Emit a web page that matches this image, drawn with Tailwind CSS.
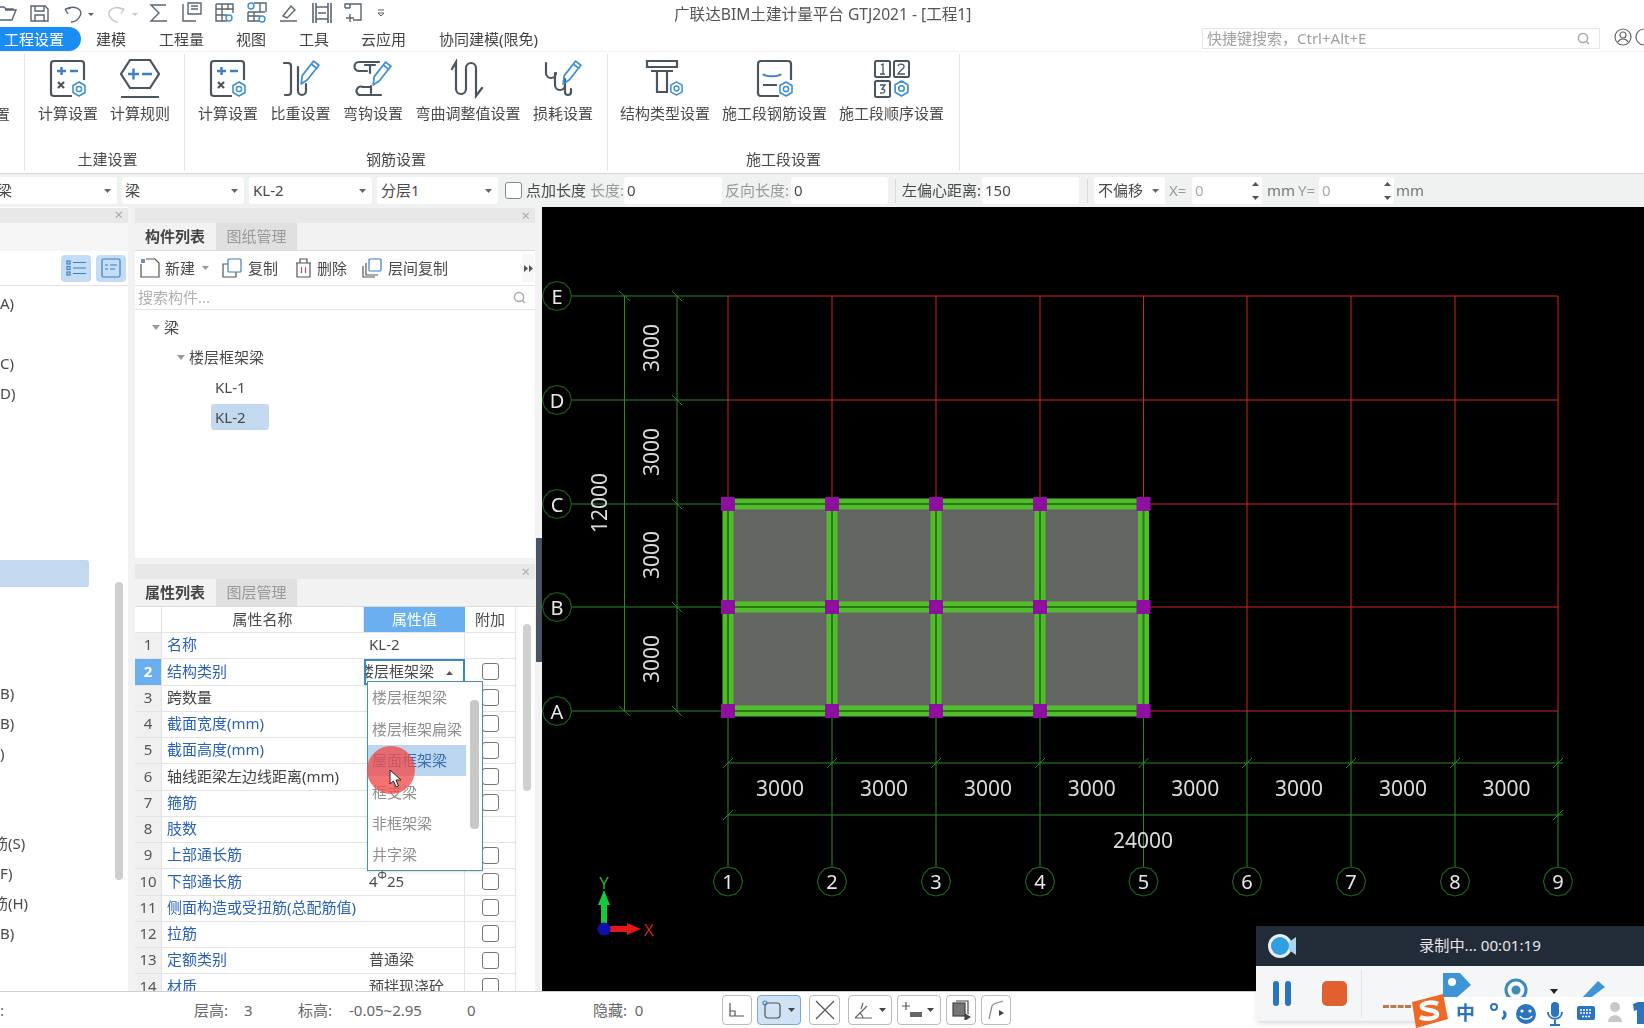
<!DOCTYPE html>
<html lang="zh">
<head>
  <meta charset="UTF-8">
  <title>广联达BIM土建计量平台 GTJ2021</title>
  <script src="https://cdn.jsdelivr.net/npm/@tailwindcss/browser@4"></script>
</head>
<body class="bg-white overflow-hidden">
<svg class="hidden">
  <symbol id="gear" viewBox="0 0 16 16"><path d="M8 1 L14 4.5 V11.5 L8 15 L2 11.5 V4.5 Z" fill="none" stroke="#3f8fd2" stroke-width="1.6" stroke-linejoin="round"/><circle cx="8" cy="8" r="2.6" fill="none" stroke="#3f8fd2" stroke-width="1.5"/></symbol>
  <symbol id="pencil" viewBox="0 0 20 26"><path d="M2 24 L3 16 L14 2 L19 6 L8 20 Z M12 5 L17 9" fill="none" stroke="#3f8fd2" stroke-width="1.7" stroke-linejoin="round"/></symbol>
  <symbol id="calc" viewBox="0 0 40 40"><path d="M24 37 H6 a3 3 0 0 1-3-3 V5 a3 3 0 0 1 3-3 H33 a3 3 0 0 1 3 3 V21" fill="none" stroke="#4a5560" stroke-width="2.2"/><path d="M9 12 H18 M13.5 8 V16 M22 12 H30" stroke="#3f7fc0" stroke-width="2.4"/><path d="M10 23 L16 29 M16 23 L10 29" stroke="#4a5560" stroke-width="2.2"/><use href="#gear" x="23" y="22" width="16" height="16"/></symbol>
</svg>
<div class="relative w-[1644px] h-[1028px] overflow-hidden flex flex-col text-[15px] text-[#4a4a4a] font-['Noto_Sans','Noto_Sans_CJK_SC',sans-serif] blur-[0.45px]">

  <!-- title bar -->
  <div class="relative h-[27px] flex items-center shrink-0">
    <svg width="400" height="27" viewBox="0 0 400 27" fill="none" stroke="#5a6570" stroke-width="1.4">
      <path d="M-3 20 H12 L16 10 H5 M-3 7 H4 L6 9 H13 V10"/>
      <path d="M31 6 H45 L48 9 V21 H31 Z M35 6 V11 H44 V6 M35 21 V15 H44 V21"/>
      <path d="M65 9 L68 14 M65 9 L71 8 M66 9 C74 5 84 9 80 16 C78 20 74 22 71 22"/>
      <path d="M88 13 L94 13 L91 16 Z" fill="#5a6570" stroke="none"/>
      <path d="M124 9 L121 14 M124 9 L118 8 M123 9 C115 5 106 10 110 17 C112 20 115 22 118 22" stroke="#c8c8c8"/>
      <path d="M132 13 L138 13 L135 16 Z" fill="#c8c8c8" stroke="none"/>
      <path d="M166 5 H151 L159 13 L151 21 H167"/>
      <path d="M183 4 V21 H196 M188 3 H201 V14 H188 Z M191 6 H198 M191 9 H198"/>
      <path d="M216 4 H233 V13 M216 4 V21 H227 M216 9 H233 M216 15 H227 M222 4 V21 M228 4 V10"/>
      <circle cx="229" cy="18" r="3" stroke="#3f8fd2"/>
      <path d="M248 12 H265 M248 12 V21 H260 M254 12 V21 M248 16 H260 M254 3 H266 V12 M260 3 V12"/>
      <circle cx="251" cy="6" r="3" stroke="#3f8fd2"/><circle cx="262" cy="19" r="3" stroke="#3f8fd2"/>
      <path d="M280 21 H297 M283 16 L291 6 L295 10 L287 18 Z"/>
      <path d="M313 3 V23 M316 3 V23 M328 3 V23 M331 3 V23 M316 7 H328 M316 19 H328 M318 13 H326" stroke-width="1.6"/>
      <path d="M345 8 V4 H353 L361 4 V20 H353 M345 8 H350 M350 4 V8 M350 14 V22 M346 18 H354"/>
      <path d="M378 10 H384 M378 13 L384 13 L381 16 Z" stroke-width="1"/>
    </svg>
    <div class="absolute left-[674px] top-[3px] text-[15.6px] leading-[22px] text-[#555] whitespace-nowrap">广联达BIM土建计量平台 GTJ2021 - [工程1]</div>
  </div>

  <!-- menu -->
  <div class="relative h-[24px] flex items-center shrink-0 text-[#444]">
    <div class="w-[81px] h-[24px] pl-[4px] bg-[#1a8df2] text-white rounded-r-[12px] flex items-center">工程设置</div>
    <div class="ml-[15px]">建模</div>
    <div class="ml-[33px]">工程量</div>
    <div class="ml-[32px]">视图</div>
    <div class="ml-[33px]">工具</div>
    <div class="ml-[32px]">云应用</div>
    <div class="ml-[33px]">协同建模(限免)</div>
    <div class="absolute left-[1202px] top-[1px] w-[398px] h-[21px] border border-[#e6e6e6] flex items-center justify-between pl-[4px] pr-[9px] text-[#a0a0a0]">
      <span>快捷键搜索，Ctrl+Alt+E</span>
      <svg width="13" height="13" viewBox="0 0 13 13" fill="none" stroke="#a8a8a8" stroke-width="1.5"><circle cx="6" cy="6" r="4.6"/><path d="M9.5 9.5 L12 12"/></svg>
    </div>
    <svg class="absolute left-[1614px] top-[0px]" width="30" height="22" viewBox="0 0 30 22" fill="none" stroke="#666" stroke-width="1.2"><circle cx="9" cy="10" r="8"/><circle cx="9" cy="8" r="3"/><path d="M4 15 C6 11 12 11 14 15"/><circle cx="30" cy="10" r="8"/></svg>
  </div>

  <!-- ribbon -->
  <div class="h-[122px] shrink-0 flex border-t border-[#f2f2f2] pt-[2px]">
    <div class="w-[25px] h-[117px] border-r border-[#e4e4e4] relative overflow-hidden">
      <span class="absolute left-[-5px] top-[49px] leading-[22px]">置</span>
    </div>
    <div class="w-[160px] h-[117px] border-r border-[#e4e4e4] flex flex-col">
      <div class="flex gap-[12px] px-[13px] flex-1">
        <div class="flex flex-col items-center">
          <svg class="mt-[5px] mb-[3px]" width="40" height="40"><use href="#calc"/></svg>
          <span class="leading-[22px] whitespace-nowrap">计算设置</span>
        </div>
        <div class="flex flex-col items-center">
          <svg class="mt-[5px] mb-[3px]" width="40" height="40" viewBox="0 0 40 40" fill="none" stroke="#4a5560" stroke-width="2.2"><path d="M10 1 H30 L39 15 L30 29 H10 L1 15 Z"/><path d="M8 15 H19 M13.5 9.5 V20.5 M22 15 H32" stroke="#3f7fc0" stroke-width="2.4"/><path d="M1 38 H39"/></svg>
          <span class="leading-[22px] whitespace-nowrap">计算规则</span>
        </div>
      </div>
      <div class="leading-[22px] text-center pb-[1px] pl-[6px]">土建设置</div>
    </div>
    <div class="w-[423px] h-[117px] border-r border-[#e4e4e4] flex flex-col">
      <div class="flex gap-[12.5px] px-[13px] flex-1">
        <div class="flex flex-col items-center">
          <svg class="mt-[5px] mb-[3px]" width="40" height="40"><use href="#calc"/></svg>
          <span class="leading-[22px] whitespace-nowrap">计算设置</span>
        </div>
        <div class="flex flex-col items-center">
          <svg class="mt-[5px] mb-[3px]" width="40" height="40" viewBox="0 0 40 40" fill="none" stroke="#4a5560" stroke-width="2.2" stroke-linecap="round"><path d="M3 4 H7 A3 3 0 0 1 10 7 V33 A3 3 0 0 1 7 36 H4 M17 8 V32 A4 4 0 0 0 25 32 V25"/><use href="#pencil" x="18" y="0" width="21" height="27"/></svg>
          <span class="leading-[22px] whitespace-nowrap">比重设置</span>
        </div>
        <div class="flex flex-col items-center">
          <svg class="mt-[5px] mb-[3px]" width="40" height="40" viewBox="0 0 40 40" fill="none" stroke="#4a5560" stroke-width="2.2" stroke-linecap="round"><path d="M26 3 H6 A4 4 0 0 0 6 12 H14 M12 6 H22 M17 6 V14 M6 36 H28 M10 28 A4 4 0 0 0 6 36 M10 28 H18 M18 27 V34"/><use href="#pencil" x="18" y="1" width="21" height="27"/></svg>
          <span class="leading-[22px] whitespace-nowrap">弯钩设置</span>
        </div>
        <div class="flex flex-col items-center">
          <svg class="mt-[5px] mb-[3px]" width="40" height="40" viewBox="0 0 40 40" fill="none" stroke="#4a5560" stroke-width="2.2" stroke-linecap="round"><path d="M4 10 L8 3 V30 A5 5 0 0 0 18 30 V9 A5 5 0 0 1 28 9 V37 L34 29"/></svg>
          <span class="leading-[22px] whitespace-nowrap">弯曲调整值设置</span>
        </div>
        <div class="flex flex-col items-center">
          <svg class="mt-[5px] mb-[3px]" width="40" height="40" viewBox="0 0 40 40" fill="none" stroke="#4a5560" stroke-width="2.2" stroke-linecap="round"><path d="M3 4 V14 A5 5 0 0 0 13 14 M12 14 V26 A5 5 0 0 0 22 26 V20 M22 26 V33 A3 3 0 0 0 28 33 V30"/><use href="#pencil" x="18" y="0" width="21" height="27"/></svg>
          <span class="leading-[22px] whitespace-nowrap">损耗设置</span>
        </div>
      </div>
      <div class="leading-[22px] text-center pb-[1px]">钢筋设置</div>
    </div>
    <div class="w-[352px] h-[117px] border-r border-[#e4e4e4] flex flex-col">
      <div class="flex gap-[12px] pl-[12px] flex-1">
        <div class="flex flex-col items-center">
          <svg class="mt-[5px] mb-[3px]" width="40" height="40" viewBox="0 0 40 40" fill="none" stroke="#4a5560" stroke-width="2.2"><path d="M2 2 H32 V8 H2 Z M6 12 H28 M12 12 V33 H22 V12"/><use href="#gear" x="24" y="22" width="15" height="15"/></svg>
          <span class="leading-[22px] whitespace-nowrap">结构类型设置</span>
        </div>
        <div class="flex flex-col items-center">
          <svg class="mt-[5px] mb-[3px]" width="40" height="40" viewBox="0 0 40 40" fill="none" stroke="#4a5560" stroke-width="2.2"><path d="M24 37 H6 a3 3 0 0 1-3-3 V5 a3 3 0 0 1 3-3 H33 a3 3 0 0 1 3 3 V21 M8 26 H22"/><path d="M8 15 C10 18 24 18 26 15" stroke="#3f7fc0"/><use href="#gear" x="23" y="22" width="16" height="16"/></svg>
          <span class="leading-[22px] whitespace-nowrap">施工段钢筋设置</span>
        </div>
        <div class="flex flex-col items-center">
          <svg class="mt-[5px] mb-[3px]" width="40" height="40" viewBox="0 0 40 40" fill="none" stroke="#4a5560" stroke-width="2"><rect x="3" y="2" width="15" height="16" rx="1.5"/><rect x="22" y="2" width="15" height="16" rx="1.5"/><rect x="3" y="22" width="15" height="16" rx="1.5"/><path d="M9 6 L11 5 V15 M8 15 H13 M26 7 C27 4 33 5 32 8 C31 11 27 12 26 15 H33 M8 26 H13 L10 30 C14 30 14 35 8 34" stroke-width="1.3"/><use href="#gear" x="21" y="21" width="17" height="17"/></svg>
          <span class="leading-[22px] whitespace-nowrap">施工段顺序设置</span>
        </div>
      </div>
      <div class="leading-[22px] text-center pb-[1px]">施工段设置</div>
    </div>
  </div>

  <!-- draw toolbar -->
  <div class="h-[34px] shrink-0 bg-[#f0f1f1] border-t border-[#d8d8d8] flex items-center whitespace-nowrap">
    <div class="w-[117px] h-[27px] bg-white rounded-r-[3px] flex items-center justify-between pr-[6px]"><span class="ml-[-3px]">梁</span><svg width="7" height="4"><path d="M0 0 H7 L3.5 4 Z" fill="#666"/></svg></div>
    <div class="ml-[5px] w-[122px] h-[27px] bg-white rounded-[3px] flex items-center justify-between pl-[3px] pr-[6px]"><span>梁</span><svg width="7" height="4"><path d="M0 0 H7 L3.5 4 Z" fill="#666"/></svg></div>
    <div class="ml-[5px] w-[123px] h-[27px] bg-white rounded-[3px] flex items-center justify-between pl-[4px] pr-[6px]"><span>KL-2</span><svg width="7" height="4"><path d="M0 0 H7 L3.5 4 Z" fill="#666"/></svg></div>
    <div class="ml-[5px] w-[121px] h-[27px] bg-white rounded-[3px] flex items-center justify-between pl-[4px] pr-[6px]"><span>分层1</span><svg width="7" height="4"><path d="M0 0 H7 L3.5 4 Z" fill="#666"/></svg></div>
    <div class="ml-[7px] w-[17px] h-[17px] bg-white border border-[#888] rounded-[3px]"></div>
    <span class="ml-[4px] w-[64px]">点加长度</span>
    <span class="w-[34px] text-[#999]">长度:</span>
    <div class="w-[98px] h-[27px] bg-white rounded-[3px] flex items-center pl-[3px]">0</div>
    <span class="ml-[3px] w-[66px] text-[#999]">反向长度:</span>
    <div class="w-[97px] h-[27px] bg-white rounded-[3px] flex items-center pl-[3px]">0</div>
    <div class="ml-[7px] w-px h-[24px] bg-[#d8d8d8]"></div>
    <span class="ml-[6px] w-[80px]">左偏心距离:</span>
    <div class="w-[97px] h-[27px] bg-white rounded-[3px] flex items-center pl-[3px]">150</div>
    <div class="ml-[8px] w-px h-[24px] bg-[#d8d8d8]"></div>
    <div class="ml-[6px] w-[71px] h-[27px] bg-white rounded-[3px] flex items-center justify-between pl-[4px] pr-[6px]"><span>不偏移</span><svg width="7" height="4"><path d="M0 0 H7 L3.5 4 Z" fill="#666"/></svg></div>
    <span class="ml-[4px] w-[23px] text-[#999]">X=</span>
    <div class="w-[70px] h-[27px] bg-white rounded-[3px] flex items-center justify-between pl-[3px] pr-[3px] text-[#aaa]"><span>0</span><svg width="7" height="20"><path d="M0 5 H7 L3.5 1 Z M0 15 H7 L3.5 19 Z" fill="#555"/></svg></div>
    <span class="ml-[5px] w-[31px] text-[#777]">mm</span>
    <span class="w-[21px] text-[#999]">Y=</span>
    <div class="w-[75px] h-[27px] bg-white rounded-[3px] flex items-center justify-between pl-[3px] pr-[3px] text-[#aaa]"><span>0</span><svg width="7" height="20"><path d="M0 5 H7 L3.5 1 Z M0 15 H7 L3.5 19 Z" fill="#555"/></svg></div>
    <span class="ml-[2px] text-[#777]">mm</span>
  </div>

  <!-- main -->
  <div class="h-[784px] shrink-0 flex bg-[#f2f2f2]">
    <!-- left panel -->
    <div class="relative w-[128px] shrink-0 bg-white flex flex-col overflow-hidden">
      <div class="h-[15px] mt-[1px] shrink-0 bg-[#e8e8e8] relative"><span class="absolute right-[5px] top-[-4px] leading-[20px] text-[#aaa]">×</span></div>
      <div class="h-[28px] shrink-0 bg-[#f5f5f5]"></div>
      <div class="h-[35px] shrink-0 border-b border-[#e2e2e2] flex items-center justify-end gap-[5px] pr-[2px]">
        <div class="w-[30px] h-[27px] bg-[#c4dcf6] rounded-[4px] flex items-center justify-center">
          <svg width="20" height="16" fill="none" stroke="#3f7fc0" stroke-width="1.2"><path d="M7 2.5 H20 M7 8 H20 M7 13.5 H20"/><rect x="1" y="1" width="3" height="3"/><rect x="1" y="6.5" width="3" height="3"/><rect x="1" y="12" width="3" height="3"/></svg>
        </div>
        <div class="w-[30px] h-[27px] bg-[#c4dcf6] rounded-[4px] flex items-center justify-center">
          <svg width="20" height="20" fill="none" stroke="#3f7fc0" stroke-width="1.2"><rect x="1" y="1" width="18" height="18" rx="1.5"/><path d="M4 7 H7 M9 7 H16 M4 11 H7 M9 11 H14"/></svg>
        </div>
      </div>
      <div id="leftList" class="pt-[2px]"></div>
      <div class="absolute left-[115px] top-[375px] w-[8px] h-[298px] rounded-[4px] bg-[#cfcfcf]"></div>
    </div>
    <div class="w-[7px] shrink-0"></div>

    <!-- center column -->
    <div class="w-[400px] shrink-0 flex flex-col">
      <div class="h-[350px] shrink-0 mt-[1px] bg-white flex flex-col">
        <div class="h-[15px] shrink-0 bg-[#e8e8e8] relative"><span class="absolute right-[5px] top-[-3px] leading-[20px] text-[#aaa]">×</span></div>
        <div class="h-[28px] shrink-0 bg-[#f2f2f2] border-b border-[#dcdcdc] flex">
          <div class="w-[80px] flex items-center justify-center font-bold text-[#444]">构件列表</div>
          <div class="w-[81px] ml-px bg-[#e0e0e0] text-[#999] flex items-center justify-center">图纸管理</div>
        </div>
        <div class="h-[35px] shrink-0 border-b border-[#e6e6e6] flex items-center pl-[5px] relative">
          <svg width="20" height="20" fill="none" stroke="#555" stroke-width="1.2"><path d="M1 6 V19 H19 V5 L15 1 H6"/><rect x="1" y="1" width="4" height="4" fill="#6c8fd0" stroke="none"/></svg>
          <span class="ml-[5px]">新建</span>
          <svg class="ml-[7px]" width="7" height="4"><path d="M0 0 H7 L3.5 4 Z" fill="#999"/></svg>
          <svg class="ml-[13px]" width="20" height="20" fill="none" stroke-width="1.2"><path d="M6 6 H1 V19 H14 V14" stroke="#555"/><rect x="6" y="1" width="13" height="13" rx="1" stroke="#3f7fc0"/></svg>
          <span class="ml-[6px]">复制</span>
          <svg class="ml-[17px]" width="17" height="20" fill="none" stroke="#555" stroke-width="1.2"><path d="M1 5 H16 M5 5 V1 H12 V5 M2 5 V19 H15 V5"/><path d="M6.5 9 V15 M10.5 9 V15" stroke="#c05050"/></svg>
          <span class="ml-[5px]">删除</span>
          <svg class="ml-[15px]" width="20" height="20" fill="none" stroke-width="1.2"><path d="M4 5 V17 H16 M1 8 V19 H13" stroke="#555"/><rect x="7" y="1" width="12" height="12" rx="1" stroke="#3f7fc0"/></svg>
          <span class="ml-[6px]">层间复制</span>
          <div class="absolute right-[1px] top-[3px] w-[12px] h-[28px] bg-[#f7f7f7] flex items-center justify-center"><svg width="9" height="7"><path d="M0 0 L4 3.5 L0 7 Z M5 0 L9 3.5 L5 7 Z" fill="#555"/></svg></div>
        </div>
        <div class="h-[24px] shrink-0 border-b border-[#e6e6e6] flex items-center justify-between pl-[3px] pr-[9px] text-[#b0b0b0]">
          <span>搜索构件...</span>
          <svg width="13" height="13" fill="none" stroke="#aaa" stroke-width="1.5"><circle cx="6" cy="6" r="4.6"/><path d="M9.5 9.5 L12 12"/></svg>
        </div>
        <div class="flex-1 pt-[2px]">
          <div class="h-[30px] flex items-center pl-[17px]"><svg width="8" height="5"><path d="M0 0 H8 L4 5 Z" fill="#999"/></svg><span class="ml-[4px]">梁</span></div>
          <div class="h-[30px] flex items-center pl-[42px]"><svg width="8" height="5"><path d="M0 0 H8 L4 5 Z" fill="#999"/></svg><span class="ml-[4px]">楼层框架梁</span></div>
          <div class="h-[30px] flex items-center pl-[80px]">KL-1</div>
          <div class="h-[30px] flex items-center pl-[76px]"><div class="w-[58px] h-[26px] pl-[4px] rounded-[3px] bg-[#c3d9f0] flex items-center">KL-2</div></div>
        </div>
      </div>
      <div class="h-[6px] shrink-0"></div>

      <div class="relative flex-1 bg-white flex flex-col overflow-hidden">
        <div class="h-[15px] shrink-0 bg-[#e8e8e8] relative"><span class="absolute right-[5px] top-[-3px] leading-[20px] text-[#aaa]">×</span></div>
        <div class="h-[28px] shrink-0 bg-[#f2f2f2] border-b border-[#dcdcdc] flex">
          <div class="w-[80px] flex items-center justify-center font-bold text-[#444]">属性列表</div>
          <div class="w-[81px] ml-px bg-[#e0e0e0] text-[#999] flex items-center justify-center">图层管理</div>
        </div>
        <div class="w-[381px] flex h-[26px] shrink-0 border-b border-[#e4e4e4] text-center leading-[25px]">
          <div class="w-[27px] border-r border-[#e4e4e4]"></div>
          <div class="w-[202px] border-r border-[#e4e4e4]">属性名称</div>
          <div class="w-[101px] bg-[#6ab0f0] text-white">属性值</div>
          <div class="w-[51px] border-r border-[#e4e4e4]">附加</div>
        </div>
        <div id="propRows" class="w-[381px]"></div>

        <!-- table scrollbar -->
        <div class="absolute left-[388px] top-[60px] w-[8px] h-[167px] rounded-[4px] bg-[#d0d0d0]"></div>

        <!-- open combo -->
        <div class="absolute left-[232px] top-[117px] w-[116px] h-[190px] bg-white border border-[#4a90b0] shadow-sm text-[#909090]">
          <div class="h-[31.4px] flex items-center pl-[4px]">楼层框架梁</div>
          <div class="h-[31.4px] flex items-center pl-[4px]">楼层框架扁梁</div>
          <div class="h-[31.4px] w-[98px] flex items-center pl-[4px] bg-[#bcd5f0] text-[#3a70b0]">屋面框架梁</div>
          <div class="h-[31.4px] flex items-center pl-[4px]">框支梁</div>
          <div class="h-[31.4px] flex items-center pl-[4px]">非框架梁</div>
          <div class="h-[31.4px] flex items-center pl-[4px]">井字梁</div>
          <div class="absolute left-[102px] top-[18px] w-[9px] h-[129px] rounded-[4px] bg-[#c8c8c8]"></div>
        </div>
        <!-- click marker, cursor -->
        <div class="absolute left-[232px] top-[182px] w-[48px] h-[48px] rounded-full bg-[#f05050]/80"></div>
        <svg class="absolute left-[254px] top-[205px]" width="14" height="20"><path d="M1 1 V15 L4.5 12 L7 18 L9.5 17 L7 11 L12 11 Z" fill="#fff" stroke="#222"/></svg>
      </div>
    </div>

    <!-- splitter -->
    <div class="w-[7px] shrink-0 relative"><div class="absolute left-[1px] top-[331px] w-[6px] h-[124px] bg-[#4a5463]"></div></div>

    <!-- canvas -->
    <div class="flex-1 bg-black overflow-hidden">
      <svg id="cad" width="1102" height="784" viewBox="542 207 1102 784" font-family="'Noto Sans','Noto Sans CJK SC',sans-serif"></svg>
    </div>
  </div>

  <!-- status bar -->
  <div class="relative flex-1 bg-white border-t border-[#cfcfcf] flex items-center text-[#666] whitespace-nowrap">
    <span class="w-[194px]">:</span>
    <span class="w-[50px]">层高:</span><span class="w-[54px]">3</span>
    <span class="w-[51px]">标高:</span><span class="w-[118px]">-0.05~2.95</span>
    <span class="w-[126px]">0</span>
    <span class="w-[129px]">隐藏:&nbsp;&nbsp;0</span>
    <div class="w-[30px] h-[30px] rounded-[4px] border border-[#bbb] flex items-center justify-center">
      <svg width="18" height="18" fill="none" stroke="#555" stroke-width="1.2"><path d="M2 2 V15 H16 M2 10 H7 V15"/></svg>
    </div>
    <div class="ml-[5px] w-[44px] h-[30px] rounded-[4px] border border-[#7aa8d8] bg-[#cfe2f6] flex items-center pl-[4px] gap-[6px]">
      <svg width="20" height="20" fill="none" stroke="#555" stroke-width="1.2"><rect x="3" y="3" width="15" height="15" rx="3"/><circle cx="3" cy="3" r="2" stroke="#3f7fc0"/></svg>
      <svg width="7" height="4"><path d="M0 0 H7 L3.5 4 Z" fill="#444"/></svg>
    </div>
    <div class="ml-[8px] w-[31px] h-[30px] rounded-[4px] border border-[#bbb] flex items-center justify-center">
      <svg width="20" height="20" fill="none" stroke="#555" stroke-width="1.2"><path d="M1 1 L19 19 M19 1 L1 19"/></svg>
    </div>
    <div class="ml-[8px] w-[44px] h-[30px] rounded-[4px] border border-[#bbb] flex items-center pl-[4px] gap-[6px]">
      <svg width="20" height="20" fill="none" stroke="#666" stroke-width="1.2"><path d="M2 18 H19 M2 18 L14 6 M10 3 L8 9 M10 18 A9 9 0 0 0 7 13" /></svg>
      <svg width="7" height="4"><path d="M0 0 H7 L3.5 4 Z" fill="#444"/></svg>
    </div>
    <div class="ml-[5px] w-[44px] h-[30px] rounded-[4px] border border-[#bbb] flex items-center pl-[3px] gap-[4px]">
      <svg width="22" height="20" fill="none" stroke="#555" stroke-width="1.2"><path d="M1 6 H9 M5 2 V10"/><rect x="9" y="12" width="12" height="5" fill="#666" stroke="none"/></svg>
      <svg width="7" height="4"><path d="M0 0 H7 L3.5 4 Z" fill="#444"/></svg>
    </div>
    <div class="ml-[5px] w-[30px] h-[30px] rounded-[4px] border border-[#bbb] flex items-center justify-center">
      <svg width="20" height="20" fill="none" stroke="#444" stroke-width="1.2"><rect x="2" y="3" width="12" height="13" fill="#777"/><path d="M5 1 H17 V14"/><path d="M14 14 L19 17 L14 20 Z" fill="#444"/></svg>
    </div>
    <div class="ml-[5px] w-[30px] h-[30px] rounded-[4px] border border-[#bbb] flex items-center justify-center">
      <svg width="20" height="20" fill="none" stroke="#888" stroke-width="1.2"><path d="M3 19 L6 6 C7 3 12 3 17 1"/><path d="M13 10 L18 13 L13 16 Z" fill="#444" stroke="none"/></svg>
    </div>
  </div>

  <!-- recorder window -->
  <div class="absolute left-[1256px] top-[926px] w-[388px] h-[95px] shadow-md">
    <div class="h-[40px] bg-[#222b38] relative flex items-center">
      <svg class="ml-[12px]" width="28" height="26" viewBox="0 0 28 26"><circle cx="12" cy="13" r="12" fill="#e4eef6"/><circle cx="12" cy="13" r="9" fill="#2f9fe0"/><path d="M21 9 L28 4 V22 L21 17 Z" fill="#a8d4ee"/></svg>
      <span class="absolute left-[163px] top-[8px] text-[15.2px] leading-[22px] text-[#e8e8e8] whitespace-nowrap">录制中... 00:01:19</span>
    </div>
    <div class="h-[55px] bg-[#f5f6f8] relative flex items-center">
      <div class="ml-[17px] w-[6px] h-[25px] rounded-[3px] bg-[#2a74b8]"></div>
      <div class="ml-[6px] w-[6px] h-[25px] rounded-[3px] bg-[#2a74b8]"></div>
      <div class="ml-[31px] w-[25px] h-[25px] rounded-[5px] bg-[#e06030]"></div>
      <div class="ml-[14px] w-px h-[48px] bg-[#e4e4e4]"></div>
      <svg class="absolute left-[187px] top-[7px]" width="28" height="26" viewBox="0 0 28 26"><path d="M0 0 H17 L28 12 L12 26 H0 Z" fill="#3e94d4"/><circle cx="9" cy="9" r="4" fill="#fff"/></svg>
      <svg class="absolute left-[248px] top-[10px]" width="26" height="24" viewBox="0 0 26 24" fill="none" stroke="#3e8ab8" stroke-width="3"><circle cx="12" cy="14" r="10"/><circle cx="12" cy="14" r="3" fill="#3e8ab8"/></svg>
      <svg class="absolute left-[294px] top-[23px]" width="8" height="5"><path d="M0 0 H8 L4 5 Z" fill="#222"/></svg>
      <svg class="absolute left-[323px] top-[11px]" width="28" height="22" viewBox="0 0 28 22"><path d="M2 22 L19 4 L26 10 L10 22 Z" fill="#3e94d4"/></svg>
    </div>
  </div>

  <!-- IME bar -->
  <div class="absolute left-[1418px] top-[997px] w-[226px] h-[31px] bg-white/95 flex items-center">
    <span class="ml-[38px] text-[19px] leading-[24px] font-bold text-[#2a74c0]">中</span>
  </div>
  <div class="absolute left-[1383px] top-[1005px] w-[28px] h-[3px] border-t-[3px] border-dashed border-[#b87850]"></div>
  <svg class="absolute left-[1410px] top-[994px]" width="38" height="34" viewBox="0 0 38 34"><path d="M2 8 L33 0 L38 25 L6 34 Z" fill="#ee6a24"/><path d="M28 10 C22 7 11 9 12 13 C13 17 26 15 27 20 C27 25 15 26 10 23" fill="none" stroke="#fff" stroke-width="4.5"/></svg>
  <svg class="absolute left-[1488px] top-[1000px]" width="156" height="28" viewBox="0 0 156 28">
    <circle cx="6" cy="7" r="3" fill="none" stroke="#2a74c0" stroke-width="2"/><path d="M15 12 C18 12 18 17 14 19" fill="none" stroke="#2a74c0" stroke-width="3"/>
    <circle cx="38" cy="14" r="10" fill="#2a74c0"/><circle cx="34" cy="11" r="1.6" fill="#fff"/><circle cx="42" cy="11" r="1.6" fill="#fff"/><path d="M32 16 C34 20 42 20 44 16" fill="none" stroke="#fff" stroke-width="1.6"/>
    <rect x="63" y="2" width="8" height="15" rx="4" fill="#2a74c0"/><path d="M60 12 C60 21 74 21 74 12 M67 20 V25 M62 25 H72" fill="none" stroke="#2a74c0" stroke-width="2"/>
    <rect x="89" y="6" width="18" height="14" rx="2" fill="#2a74c0"/><path d="M92 10 H104 M92 13 H104 M94 16.5 H102" stroke="#fff" stroke-width="1.6" stroke-dasharray="2 1"/>
    <circle cx="127" cy="7" r="5" fill="#c8c8c8"/><path d="M120 22 C120 13 134 13 134 22 Z" fill="#c8c8c8"/>
    <path d="M145 4 L150 2 H156 V24 H149 V10 L146 11 Z" fill="#2a74c0"/>
  </svg>
</div>

<script>
  // left tree, only the clipped right end is on screen
  const leftRows = {0:"A)",2:"C)",3:"D)",13:"B)",14:"B)",15:")",19:"F)",21:"B)"};
  const leftCut = {18:"筋(S)",20:"筋(H)"};
  let leftHtml = "";
  for (let i = 0; i < 22; i++) {
    const txt = leftRows[i] || "";
    if (i === 9) {
      leftHtml += `<div class="h-[30px] flex items-center"><div class="w-[89px] h-[27px] bg-[#c3d9f0] rounded-r-[3px]"></div></div>`;
    } else if (leftCut[i]) {
      leftHtml += `<div class="h-[30px] flex items-center"><span class="ml-[-7px]">${leftCut[i]}</span></div>`;
    } else {
      leftHtml += `<div class="h-[30px] flex items-center">${txt}</div>`;
    }
  }
  document.getElementById("leftList").innerHTML = leftHtml;

  // property table
  const props = [
    ["名称","KL-2",1,0],["结构类别","",1,1],["跨数量","",0,1],["截面宽度(mm)","",1,1],["截面高度(mm)","",1,1],
    ["轴线距梁左边线距离(mm)","",0,1],["箍筋","",1,1],["肢数","",1,0],["上部通长筋","",1,1],
    ["下部通长筋",'4<sup class="text-[11px]">Φ</sup>25',1,1],["侧面构造或受扭筋(总配筋值)","",1,1],["拉筋","",1,1],
    ["定额类别","普通梁",1,1],["材质","预拌现浇砼",1,1]
  ];
  document.getElementById("propRows").innerHTML = props.map((p, i) => {
    const active = i === 1;
    const numCls = active ? "bg-[#6ab0f0] text-white font-bold" : "bg-[#f0f0f0] text-[#555]";
    const nameCls = p[2] ? "text-[#2a62b8]" : "text-[#444]";
    const value = active
      ? `<div class="w-[101px] h-[26px] border-2 border-[#3a8ab8] flex items-center overflow-hidden relative"><span class="ml-[-7px] pb-[2px] whitespace-nowrap">楼层框架梁</span><svg class="absolute left-[80px] top-[10px]" width="7" height="4"><path d="M0 4 H7 L3.5 0 Z" fill="#555"/></svg></div>`
      : `<div class="w-[101px] h-full flex items-center pb-[2px] border-r border-[#e4e4e4] pl-[5px] whitespace-nowrap overflow-hidden">${p[1]}</div>`;
    const box = p[3] ? `<div class="w-[17px] h-[17px] bg-white border border-[#777] rounded-[3px]"></div>` : "";
    return `<div class="flex h-[26.25px] items-center border-b border-[#e4e4e4]">
      <div class="w-[27px] h-full flex items-center justify-center pb-[2px] border-r border-[#e4e4e4] ${numCls}">${i + 1}</div>
      <div class="w-[202px] pl-[5px] pb-[2px] whitespace-nowrap ${nameCls}">${p[0]}</div>
      ${value}
      <div class="w-[51px] h-full flex items-center justify-center pb-[1px] border-r border-[#e4e4e4]">${box}</div>
    </div>`;
  }).join("");

  // cad canvas, in page coordinates (viewBox starts at the canvas corner)
  const xs = [728, 832, 936, 1040, 1143.5, 1247, 1351, 1455, 1558];
  const ys = [711, 607, 504, 400, 296];
  const GREEN = "#2a8a2a", RED = "#d02222";
  let s = "";
  const line = (x1, y1, x2, y2, c, w = 1) => `<line x1="${x1}" y1="${y1}" x2="${x2}" y2="${y2}" stroke="${c}" stroke-width="${w}"/>`;
  const text = (x, y, t, size = 21, fill = "#dcdcdc", rot = false) =>
    `<text x="${x}" y="${y}" font-size="${size}" fill="${fill}" text-anchor="middle" dominant-baseline="central"${rot ? ` transform="rotate(-90 ${x} ${y})"` : ""}>${t}</text>`;
  const bubble = (cx, cy, r = 14.5) => {
    let pts = [];
    for (let i = 0; i < 12; i++) pts.push((cx + r * Math.sin(i * Math.PI / 6)).toFixed(1) + "," + (cy - r * Math.cos(i * Math.PI / 6)).toFixed(1));
    return `<polygon points="${pts.join(" ")}" fill="none" stroke="#1d5e1d" stroke-width="1.2"/>`;
  };

  // red grid
  ys.forEach(y => { s += line(728, y, 1558, y, RED); });
  xs.forEach(x => { s += line(x, 296, x, 711, RED); });
  // green axis extensions and dimensions
  ys.forEach(y => { s += line(571, y, 728, y, GREEN); s += bubble(557, y); });
  xs.forEach(x => { s += line(x, 711, x, 867, GREEN); s += bubble(x, 881.5); });
  s += line(624.5, 296, 624.5, 711, GREEN) + line(677, 296, 677, 711, GREEN);
  s += line(728, 763, 1563, 763, GREEN) + line(728, 815, 1563, 815, GREEN);
  [296, 711].forEach(y => { s += line(619, y - 5, 630, y + 5, GREEN); });
  ys.forEach(y => { s += line(672, y - 5, 682, y + 5, GREEN); });
  xs.forEach(x => { s += line(x - 5, 768, x + 5, 758, GREEN); });
  [728, 1558].forEach(x => { s += line(x - 5, 820, x + 5, 810, GREEN); });

  // slab fill, then beams, then columns
  s += `<rect x="728" y="504" width="415.5" height="207" fill="#646664"/>`;
  [504, 607, 711].forEach(y => {
    s += `<rect x="724" y="${y - 5.5}" width="424" height="11" fill="#52bd2c"/>` + line(724, y, 1148, y, "#2a7a10", 2);
  });
  xs.slice(0, 5).forEach(x => {
    s += `<rect x="${x - 5.5}" y="499" width="11" height="217" fill="#52bd2c"/>` + line(x, 499, x, 716, "#2a7a10", 2);
  });
  xs.slice(0, 5).forEach(x => [504, 607, 711].forEach(y => {
    s += `<rect x="${x - 7}" y="${y - 7}" width="14" height="14" fill="#8f10a0"/>`;
  }));

  // labels
  ["A", "B", "C", "D", "E"].forEach((l, i) => { s += text(557, ys[i], l, 20, "#e8e8e8"); });
  xs.forEach((x, i) => { s += text(x, 881.5, i + 1, 20, "#e8e8e8"); });
  for (let i = 0; i < 8; i++) s += text((xs[i] + xs[i + 1]) / 2, 788, "3000");
  s += text(1143, 840, "24000");
  [348, 452, 555, 659].forEach(y => { s += text(651, y, "3000", 21, "#dcdcdc", true); });
  s += text(599, 503, "12000", 21, "#dcdcdc", true);

  // ucs gizmo
  s += `<rect x="601" y="904" width="6" height="20" fill="#16c83a"/><path d="M604 890 L610 905 H598 Z" fill="#16c83a"/>`;
  s += `<rect x="610" y="926" width="20" height="6" fill="#e01818"/><path d="M641 929 L627 923 V935 Z" fill="#e01818"/>`;
  s += `<circle cx="604" cy="929" r="6.5" fill="#1010b0"/>`;
  s += text(604, 882, "Y", 17, "#20b030") + text(649, 929, "X", 17, "#d02020");

  document.getElementById("cad").innerHTML = s;
</script>
</body>
</html>
